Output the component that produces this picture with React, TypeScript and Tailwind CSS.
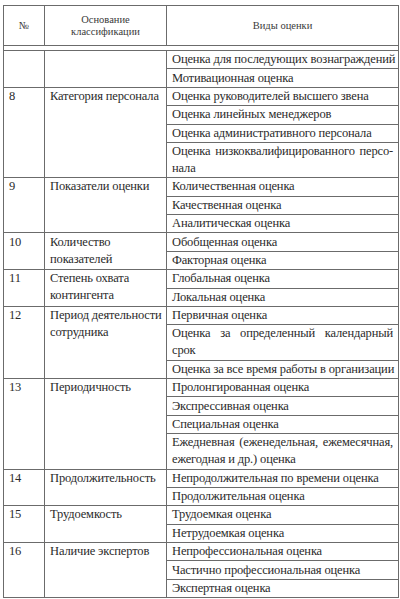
import React from 'react';

// One classification group: number, basis (may wrap to two lines) and the kinds of assessment
interface Group {
  n: string;
  name: string[];
  items: string[][];
}

const groups: Group[] = [
  { n: '', name: [], items: [['Оценка для последующих вознаграждений'], ['Мотивационная оценка']] },
  {
    n: '8',
    name: ['Категория персонала'],
    items: [
      ['Оценка руководителей высшего звена'],
      ['Оценка линейных менеджеров'],
      ['Оценка административного персонала'],
      ['Оценка низкоквалифицированного персо-', 'нала'],
    ],
  },
  {
    n: '9',
    name: ['Показатели оценки'],
    items: [['Количественная оценка'], ['Качественная оценка'], ['Аналитическая оценка']],
  },
  { n: '10', name: ['Количество', 'показателей'], items: [['Обобщенная оценка'], ['Факторная оценка']] },
  { n: '11', name: ['Степень охвата', 'контингента'], items: [['Глобальная оценка'], ['Локальная оценка']] },
  {
    n: '12',
    name: ['Период деятельности', 'сотрудника'],
    items: [
      ['Первичная оценка'],
      ['Оценка за определенный календарный', 'срок'],
      ['Оценка за все время работы в организации'],
    ],
  },
  {
    n: '13',
    name: ['Периодичность'],
    items: [
      ['Пролонгированная оценка'],
      ['Экспрессивная оценка'],
      ['Специальная оценка'],
      ['Ежедневная (еженедельная, ежемесячная,', 'ежегодная и др.) оценка'],
    ],
  },
  {
    n: '14',
    name: ['Продолжительность'],
    items: [['Непродолжительная по времени оценка'], ['Продолжительная оценка']],
  },
  { n: '15', name: ['Трудоемкость'], items: [['Трудоемкая оценка'], ['Нетрудоемкая оценка']] },
  {
    n: '16',
    name: ['Наличие экспертов'],
    items: [['Непрофессиональная оценка'], ['Частично профессиональная оценка'], ['Экспертная оценка']],
  },
];

const cell =
  "border border-[#6b6b6b] align-top px-[5px] py-[0.2px] leading-[17px] text-[12.5px] tracking-[-0.15px] text-[#2b2b2b] font-['Liberation_Serif',serif]";

const head =
  "border border-[#6b6b6b] font-normal text-center align-middle text-[10.5px] leading-[12px] text-[#3a3a3a] font-['Liberation_Serif',serif]";

const Lines: React.FC<{ lines: string[]; justify?: boolean }> = ({ lines, justify }) => (
  <>
    {lines.map((l, i) => (
      <div
        key={i}
        className={
          justify && lines.length > 1 && i === 0
            ? 'whitespace-nowrap text-justify [text-align-last:justify]'
            : 'whitespace-nowrap'
        }
      >
        {l}
      </div>
    ))}
  </>
);

export default function App() {
  return (
    <div className="w-[400px] h-[599px] bg-white overflow-hidden pt-[5px] pl-[3px] font-['Liberation_Serif',serif]">
      <table className="table-fixed border-collapse w-[395px]">
        <colgroup>
          <col className="w-[41px]" />
          <col className="w-[122px]" />
          <col className="w-[232px]" />
        </colgroup>
        <thead>
          <tr className="h-[40px]">
            <th className={head}>№</th>
            <th className={head}>
              Основание
              <br />
              классификации
            </th>
            <th className={head}>Виды оценки</th>
          </tr>
        </thead>
        <tbody>
          <tr className="h-[5px]">
            <td colSpan={3} className="border border-[#6b6b6b] p-0 leading-[0px]" />
          </tr>
          {groups.map(g =>
            g.items.map((it, i) => (
              <tr key={g.n + '-' + i}>
                {i === 0 && (
                  <>
                    <td rowSpan={g.items.length} className={cell}>
                      {g.n}
                    </td>
                    <td rowSpan={g.items.length} className={cell}>
                      <Lines lines={g.name} />
                    </td>
                  </>
                )}
                <td className={cell}>
                  <Lines lines={it} justify />
                </td>
              </tr>
            ))
          )}
        </tbody>
      </table>
    </div>
  );
}
